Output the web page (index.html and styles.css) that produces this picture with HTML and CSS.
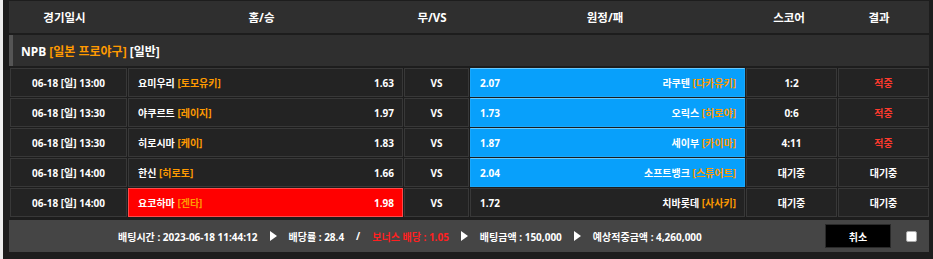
FILE: index.html
```html
<!DOCTYPE html>
<html lang="ko">
<head>
<meta charset="utf-8">
<title>배팅내역</title>
<link rel="stylesheet" href="styles.css">
</head>
<body>
<div class="wrap">
  <div class="head">
    <div>경기일시</div>
    <div>홈/승</div>
    <div>무/VS</div>
    <div>원정/패</div>
    <div>스코어</div>
    <div>결과</div>
  </div>
  <div class="league"><span>NPB <span class="or">[일본 프로야구]</span> [일반]</span></div>
  <div class="rows">
    <div class="row">
      <div class="c date">06-18 [일] 13:00</div>
      <div class="c home"><span>요미우리 <span class="or">[토모유키]</span></span><span>1.63</span></div>
      <div class="c vs">VS</div>
      <div class="c away blue"><span>2.07</span><span>라쿠텐 <span class="or">[다카유키]</span></span></div>
      <div class="c mid">1:2</div>
      <div class="c mid red">적중</div>
    </div>
    <div class="row">
      <div class="c date">06-18 [일] 13:30</div>
      <div class="c home"><span>야쿠르트 <span class="or">[레이지]</span></span><span>1.97</span></div>
      <div class="c vs">VS</div>
      <div class="c away blue"><span>1.73</span><span>오릭스 <span class="or">[히로야]</span></span></div>
      <div class="c mid">0:6</div>
      <div class="c mid red">적중</div>
    </div>
    <div class="row">
      <div class="c date">06-18 [일] 13:30</div>
      <div class="c home"><span>히로시마 <span class="or">[케이]</span></span><span>1.83</span></div>
      <div class="c vs">VS</div>
      <div class="c away blue"><span>1.87</span><span>세이부 <span class="or">[카이마]</span></span></div>
      <div class="c mid">4:11</div>
      <div class="c mid red">적중</div>
    </div>
    <div class="row">
      <div class="c date">06-18 [일] 14:00</div>
      <div class="c home"><span>한신 <span class="or">[히로토]</span></span><span>1.66</span></div>
      <div class="c vs">VS</div>
      <div class="c away blue"><span>2.04</span><span>소프트뱅크 <span class="or">[스튜어트]</span></span></div>
      <div class="c mid">대기중</div>
      <div class="c mid">대기중</div>
    </div>
    <div class="row">
      <div class="c date">06-18 [일] 14:00</div>
      <div class="c home sel-red"><span>요코하마 <span class="or">[겐타]</span></span><span>1.98</span></div>
      <div class="c vs">VS</div>
      <div class="c away"><span>1.72</span><span>치바롯데 <span class="or">[사사키]</span></span></div>
      <div class="c mid">대기중</div>
      <div class="c mid">대기중</div>
    </div>
  </div>
  <div class="foot">
    <div class="info">
      <span>배팅시간 : 2023-06-18 11:44:12</span>
      <svg class="tri" width="7" height="10" viewBox="0 0 7 10"><path d="M0 0L7 5L0 10Z" fill="#fff"/></svg>
      <span>배당률 : 28.4</span>
      <span>/</span>
      <span class="bonus">보너스 배당 : 1.05</span>
      <svg class="tri" width="7" height="10" viewBox="0 0 7 10"><path d="M0 0L7 5L0 10Z" fill="#fff"/></svg>
      <span>배팅금액 : 150,000</span>
      <svg class="tri" width="7" height="10" viewBox="0 0 7 10"><path d="M0 0L7 5L0 10Z" fill="#fff"/></svg>
      <span>예상적중금액 : 4,260,000</span>
    </div>
    <div class="btn">취소</div>
    <span class="chk"></span>
  </div>
</div>
</body>
</html>
```
FILE: styles.css
```css
html {
  background: #1d1d1d;
}
body {
  margin: 0;
  min-height: 259px;
  border-left: 3px solid #ededed;
  background: #1d1d1d;
  font-family: "Noto Sans", "Noto Sans CJK KR", sans-serif;
  font-weight: 700;
  color: #fff;
}
.wrap {
  margin-left: 6px;
  width: 920px;
  padding-top: 1px;
}
.head {
  display: grid;
  grid-template-columns: 111px 283px 58px 288px 80px 100px;
  height: 32px;
  align-items: center;
  background: #2f2f2f;
  font-size: 11.5px;
  text-align: center;
}
.league {
  margin-top: 2px;
  height: 31px;
  background: #2f2f2f;
  border-left: 4px solid #555;
  display: flex;
  align-items: center;
  padding-left: 8px;
  font-size: 12px;
}
.or {
  color: #ff9a00;
}
.rows {
  margin-top: 2px;
  margin-left: 1px;
  display: flex;
  flex-direction: column;
  gap: 1px;
}
.row {
  display: grid;
  grid-template-columns: 117px 275px 65px 275px 91px 91px;
  column-gap: 1px;
  height: 29px;
}
.c {
  box-sizing: border-box;
  background: #232323;
  border: 1px solid #383838;
  display: flex;
  align-items: center;
  font-size: 10px;
  white-space: nowrap;
}
.date, .vs, .mid {
  justify-content: center;
}
.home, .away {
  justify-content: space-between;
  padding: 0 8px 0 9px;
}
.blue {
  background: #08a0fb;
  border-color: #1aa8fb;
  border-top-color: #66c8ff;
}
.sel-red {
  background: #ff0000;
  border-color: #ff4a4a;
}
.red {
  color: #ff3a2e;
}
.foot {
  margin-top: 3px;
  height: 32px;
  background: #454545;
  display: flex;
  align-items: center;
  font-size: 10px;
}
.info {
  display: flex;
  align-items: center;
  gap: 12px;
  padding-left: 109px;
}
.bonus {
  color: #ff2020;
}
.tri {
  display: block;
}
.btn {
  margin-left: auto;
  width: 66px;
  height: 24px;
  background: #000;
  border: 1px solid #2a2a2a;
  box-sizing: border-box;
  display: flex;
  align-items: center;
  justify-content: center;
  font-size: 10px;
}
.chk {
  width: 9px;
  height: 9px;
  background: #fff;
  border: 1px solid #aaa;
  border-radius: 2px;
  margin: 0 12px 0 15px;
}
```
